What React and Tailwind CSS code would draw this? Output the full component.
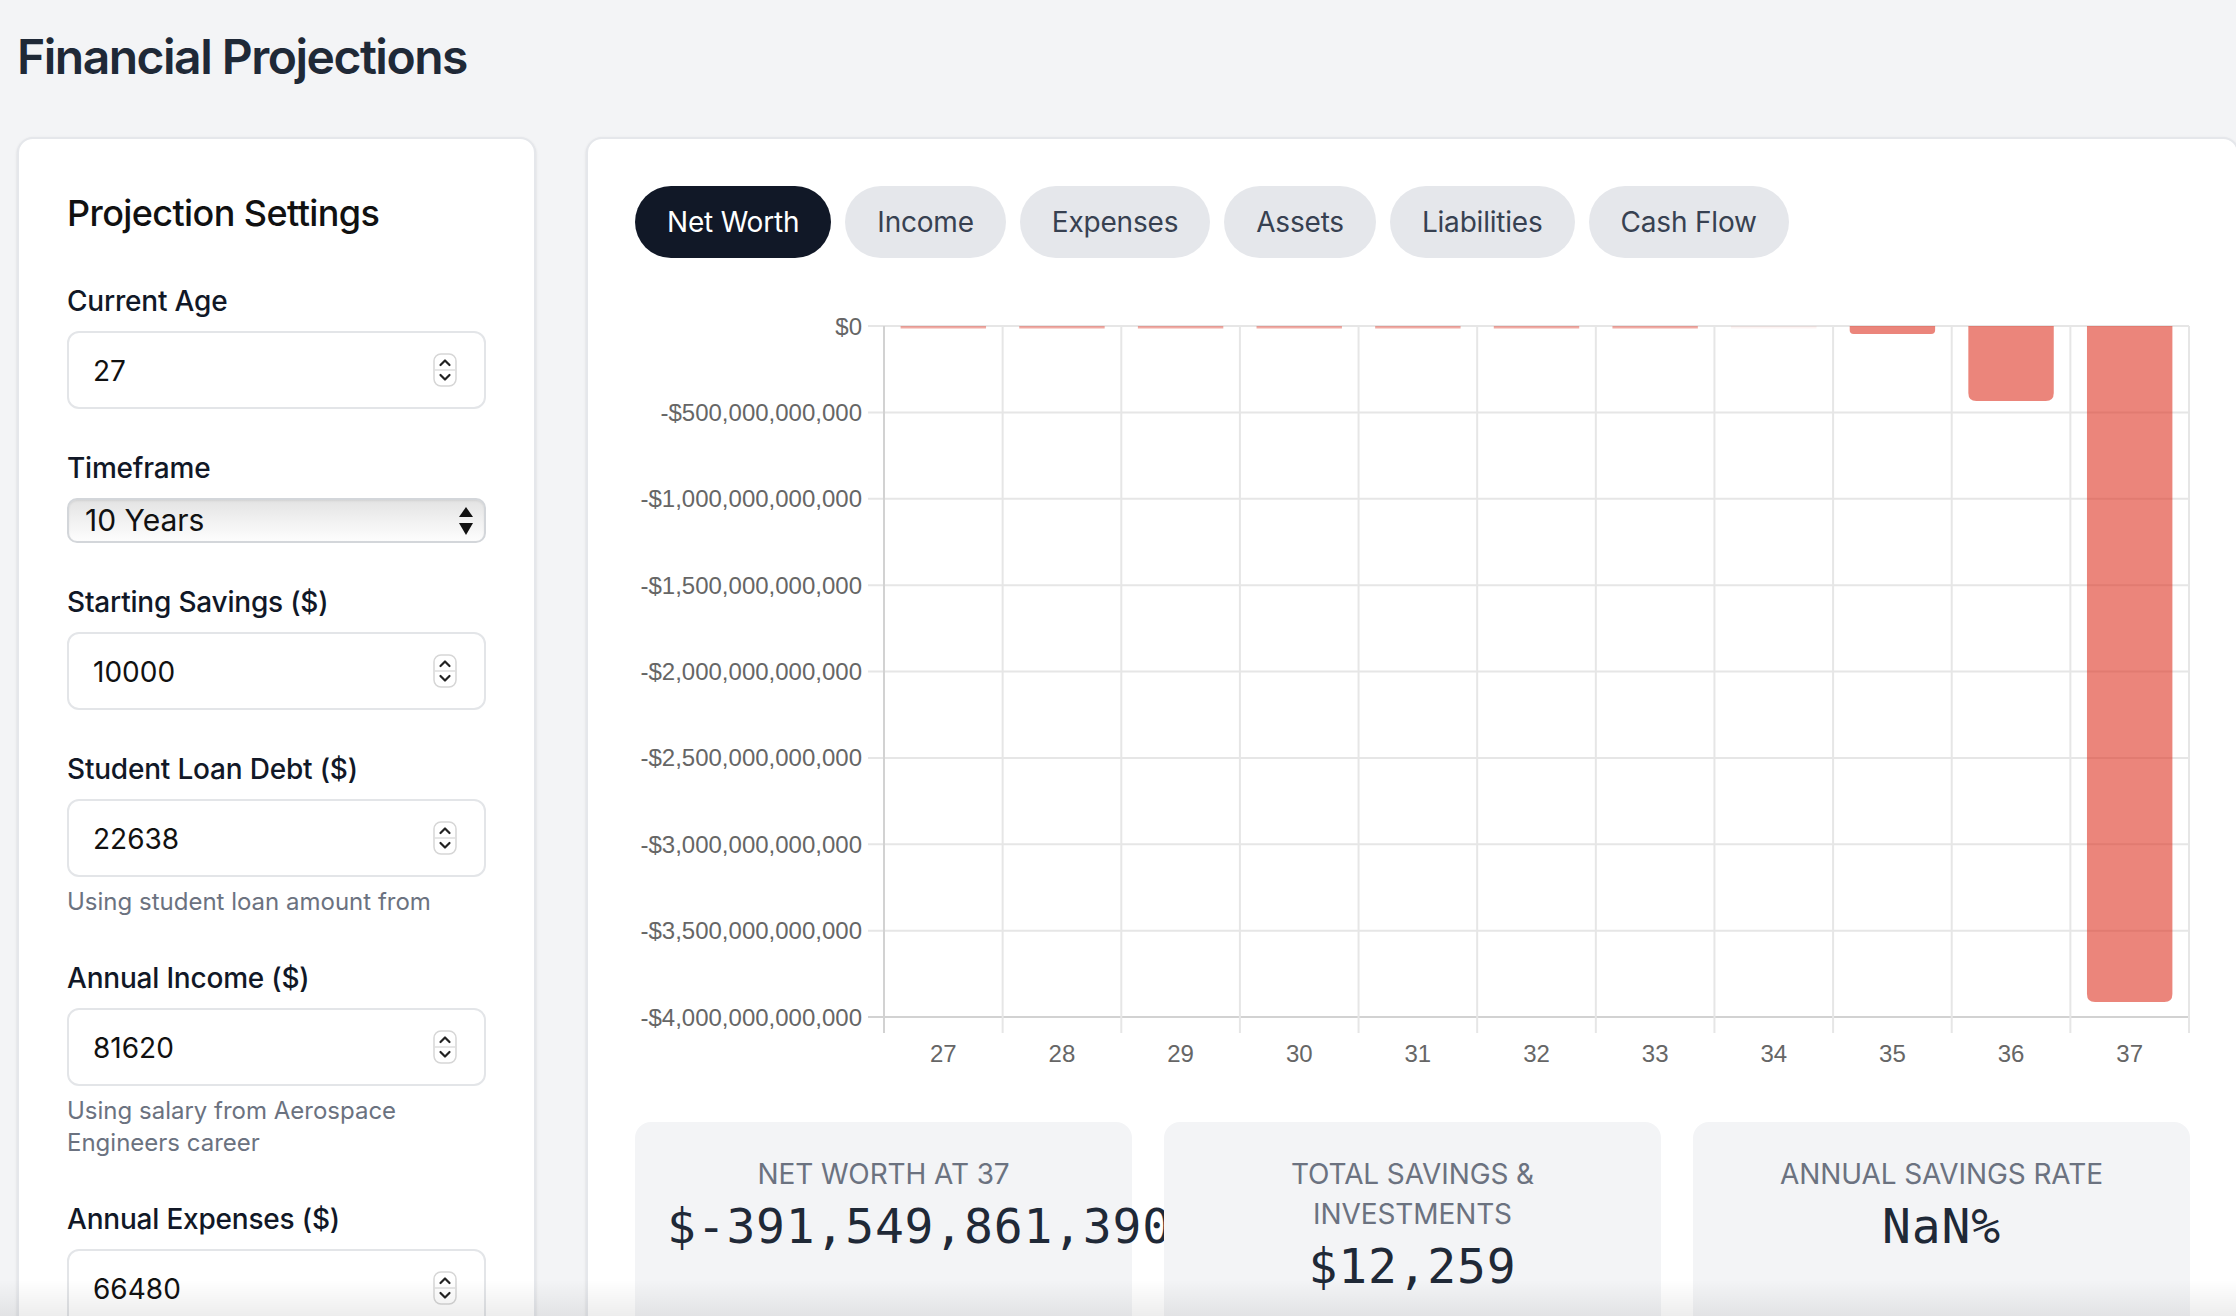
import React from "react";

const Spinner = () => (
  <svg width="24" height="34" viewBox="0 0 24 34" className="shrink-0">
    <rect x="1" y="1" width="22" height="32" rx="7" fill="#fff" stroke="#d6d6d6" strokeWidth="1.5" />
    <line x1="1.5" y1="17" x2="22.5" y2="17" stroke="#dedede" strokeWidth="1.5" />
    <path d="M7.5 12 L12 7.5 L16.5 12" fill="none" stroke="#222" strokeWidth="2.2" strokeLinecap="round" strokeLinejoin="round" />
    <path d="M7.5 22 L12 26.5 L16.5 22" fill="none" stroke="#222" strokeWidth="2.2" strokeLinecap="round" strokeLinejoin="round" />
  </svg>
);

const NumberField = ({ label, value, helper }) => (
  <div>
    <div className="mb-[10px] text-[28px] font-medium leading-[40px] tracking-[-0.2px] text-[#111827]">{label}</div>
    <div className="flex h-[78px] items-center justify-between rounded-[12px] border-2 border-[#e3e5e8] bg-white pl-[24px] pr-[27px] text-[28px] text-[#111]">
      <span className="pt-[2px]">{value}</span>
      <Spinner />
    </div>
    {helper && (
      <div className="mb-[1px] mt-[9px] text-[24px] leading-[32px] text-[#6b7280]">{helper}</div>
    )}
  </div>
);

const tabs = ["Net Worth", "Income", "Expenses", "Assets", "Liabilities", "Cash Flow"];

const yLabels = [
  "$0",
  "-$500,000,000,000",
  "-$1,000,000,000,000",
  "-$1,500,000,000,000",
  "-$2,000,000,000,000",
  "-$2,500,000,000,000",
  "-$3,000,000,000,000",
  "-$3,500,000,000,000",
  "-$4,000,000,000,000",
];

const ages = [27, 28, 29, 30, 31, 32, 33, 34, 35, 36, 37];
// bottom y of each bar in svg coords (top is zero line at 36)
const barBottoms = [38, 38, 38, 38, 38, 38, 38, 38, 44, 111, 712];

const Chart = () => {
  const left = 249;
  const right = 1554;
  const zeroY = 36;
  const step = 86.375;
  const cat = (right - left) / 11;
  const barW = cat * 0.72;
  const bottomY = zeroY + step * 8;
  return (
    <svg width="1555" height="800" viewBox="0 0 1555 800" className="block">
      {yLabels.map((l, k) => {
        const y = zeroY + k * step;
        return (
          <g key={l}>
            <line x1={233} x2={right} y1={y} y2={y} stroke={k === 8 ? "#d2d2d2" : "#e6e6e6"} strokeWidth="2" />
            <text
              x={227}
              y={y + 8.5}
              textAnchor="end"
              fontSize="24"
              fill="#666"
              fontFamily="'Liberation Sans', Arial, sans-serif"
            >
              {l}
            </text>
          </g>
        );
      })}
      {Array.from({ length: 12 }).map((_, i) => {
        const x = left + i * cat;
        return (
          <line key={i} x1={x} x2={x} y1={zeroY} y2={bottomY + 16} stroke={i === 0 ? "#d2d2d2" : "#e6e6e6"} strokeWidth="2" />
        );
      })}
      {ages.map((a, i) => {
        const cx = left + (i + 0.5) * cat;
        const x0 = cx - barW / 2;
        const x1 = cx + barW / 2;
        const y1 = barBottoms[i];
        const h = y1 - zeroY;
        if (h <= 2) {
          return (
            <rect
              key={a}
              x={x0}
              y={zeroY}
              width={barW}
              height={2.5}
              fill={i === 7 ? "rgba(221,52,35,0.06)" : "rgba(221,52,35,0.42)"}
            />
          );
        }
        const r = Math.min(8, h / 2);
        const d = `M ${x0} ${zeroY} H ${x1} V ${y1 - r} Q ${x1} ${y1} ${x1 - r} ${y1} H ${x0 + r} Q ${x0} ${y1} ${x0} ${y1 - r} Z`;
        return <path key={a} d={d} fill="rgba(221,52,35,0.6)" />;
      })}
      {ages.map((a, i) => (
        <text
          key={a}
          x={left + (i + 0.5) * cat}
          y={772}
          textAnchor="middle"
          fontSize="24"
          fill="#666"
          fontFamily="'Liberation Sans', Arial, sans-serif"
        >
          {a}
        </text>
      ))}
    </svg>
  );
};

const Stat = ({ label, value }) => (
  <div className="relative h-[300px] rounded-[16px] bg-[#f3f4f6] p-[32px] text-center">
    <div className="text-[28px] uppercase leading-[40px] tracking-[-0.1px] text-[#6b7280]">{label}</div>
    <div className="whitespace-nowrap font-['DejaVu_Sans_Mono',monospace] text-[48px] leading-[64px] tracking-[0.8px] text-[#1f2937]">
      {value}
    </div>
  </div>
);

export default function App() {
  return (
    <div className="relative h-[1316px] w-[2236px] overflow-hidden bg-[#f3f4f6] font-['Inter',sans-serif]">
      <div className="pl-[17px] pt-[25px]">
        <h1 className="mb-[48px] text-[48px] font-semibold leading-[64px] tracking-[-1.5px] text-[#1f2937]">Financial Projections</h1>
        <div className="flex items-start gap-[50px]">
          <aside className="w-[519px] shrink-0 rounded-[16px] border-2 border-[#e5e7eb] bg-white px-[48px] pb-[48px] pt-[46px] shadow-sm">
            <h2 className="mb-[40px] text-[36px] font-medium leading-[56px] tracking-[-0.6px] text-[#111]">Projection Settings</h2>
            <div className="flex flex-col gap-[39px]">
              <NumberField label="Current Age" value="27" />
              <div>
                <div className="mb-[10px] text-[28px] font-medium leading-[40px] tracking-[-0.2px] text-[#111827]">Timeframe</div>
                <div className="flex h-[45px] items-center justify-between rounded-[10px] border-2 border-[#d3d6da] bg-linear-to-b from-[#e3e3e3] via-[#f1f1f1] to-[#fdfdfd] pl-[16px] pr-[11px] text-[30px] text-[#111] shadow-[inset_0_1px_2px_rgba(0,0,0,0.08)]">
                  <span>10 Years</span>
                  <svg width="14" height="28" viewBox="0 0 14 28">
                    <path d="M0 10 L7 0 L14 10 Z" fill="#111" />
                    <path d="M0 16 L14 16 L7 28 Z" fill="#111" />
                  </svg>
                </div>
              </div>
              <NumberField label="Starting Savings ($)" value="10000" />
              <NumberField label="Student Loan Debt ($)" value="22638" helper="Using student loan amount from" />
              <NumberField label="Annual Income ($)" value="81620" helper="Using salary from Aerospace Engineers career" />
              <NumberField label="Annual Expenses ($)" value="66480" />
            </div>
          </aside>
          <main className="w-[1653px] shrink-0 rounded-[16px] border-2 border-[#e5e7eb] bg-white p-[47px] shadow-sm">
            <div className="flex gap-[14px]">
              {tabs.map((t, i) => (
                <div
                  key={t}
                  className={
                    i === 0
                      ? "flex h-[72px] items-center rounded-full bg-[#111827] px-[32px] text-[28px] leading-[40px] tracking-[-0.2px] text-white"
                      : "flex h-[72px] items-center rounded-full bg-[#e5e7eb] px-[32px] text-[28px] leading-[40px] tracking-[-0.2px] text-[#374151]"
                  }
                >
                  {t}
                </div>
              ))}
            </div>
            <div className="mt-[32px]">
              <Chart />
            </div>
            <div className="mt-[32px] grid grid-cols-3 gap-[32px]">
              <Stat label="Net Worth at 37" value="$-391,549,861,390" />
              <Stat label="Total Savings & Investments" value="$12,259" />
              <Stat label="Annual Savings Rate" value="NaN%" />
            </div>
          </main>
        </div>
      </div>
      <div className="pointer-events-none absolute inset-x-0 bottom-0 h-[36px] bg-linear-to-b from-transparent to-[rgba(0,0,0,0.07)]" />
    </div>
  );
}
